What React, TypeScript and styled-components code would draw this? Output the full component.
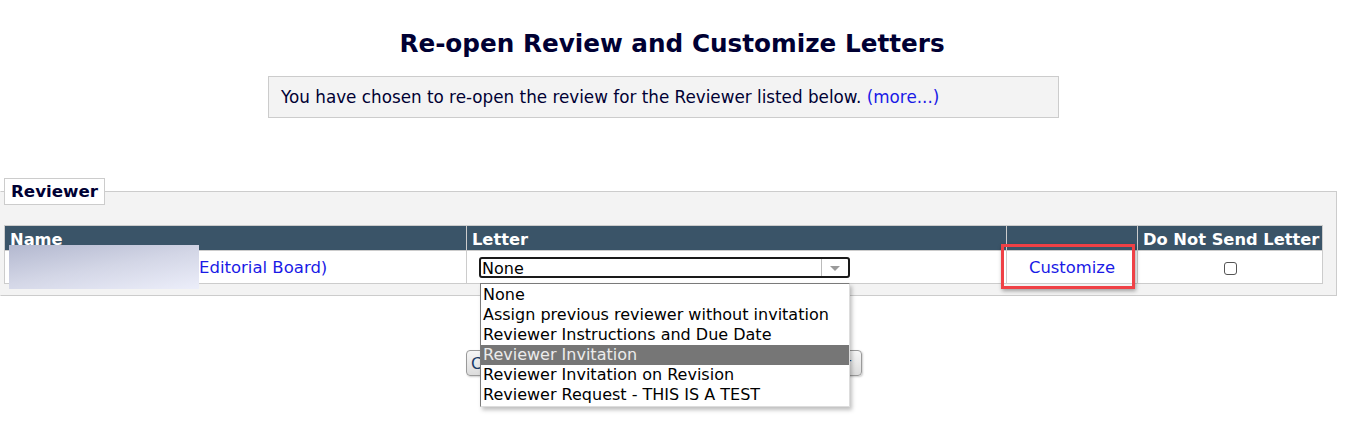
import React from "react";
import styled, { createGlobalStyle } from "styled-components";

const Global = createGlobalStyle`
  html, body { margin: 0; padding: 0; background: #fff; }
  body { font-family: "DejaVu Sans", Verdana, sans-serif; color: #000; }
`;

const Page = styled.div`
  width: 1361px;
  height: 432px;
  overflow: hidden;
  position: relative;
`;

const Title = styled.h1`
  margin: 0;
  padding-top: 29px;
  width: 1344px;
  text-align: center;
  font-size: 24.7px;
  font-weight: bold;
  line-height: 30px;
  color: #000033;
`;

const InfoBox = styled.div`
  margin: 17px 0 0 268px;
  width: 791px;
  height: 42px;
  box-sizing: border-box;
  border: 1px solid #cccccc;
  background: #f3f3f3;
  padding: 0 12px;
  display: flex;
  align-items: center;
  font-size: 16.8px;
  color: #000033;
`;

const Link = styled.a`
  color: #1a1ae6;
  text-decoration: none;
  cursor: pointer;
`;

const Fieldset = styled.fieldset`
  margin: 60px 0 0 0;
  width: 1337px;
  box-sizing: border-box;
  border: 1px solid #cccccc;
  border-left-color: #f3f3f3;
  background: #f3f3f3;
  padding: 0 0 11px 3px;
  min-width: 0;
`;

const Legend = styled.legend`
  background: #fff;
  border: 1px solid #cccccc;
  padding: 0 6px;
  height: 27px;
  box-sizing: border-box;
  font-size: 16.7px;
  font-weight: bold;
  line-height: 25px;
  color: #000033;
`;

const Table = styled.table`
  margin-top: 20px;
  width: 1319px;
  border-collapse: collapse;
  background: #fff;
  table-layout: fixed;
`;

const Th = styled.th<{ $w: number }>`
  width: ${(p) => p.$w}px;
  background: #3a5468;
  color: #fff;
  font-size: 16.3px;
  font-weight: bold;
  text-align: left;
  padding: 3px 5px 0;
  height: 21px;
  line-height: 21px;
  border: 1px solid #cccccc;
  white-space: nowrap;
  overflow: hidden;
`;

const Td = styled.td<{ $align?: string }>`
  border: 1px solid #cccccc;
  height: 32px;
  padding: 0 5px;
  text-align: ${(p) => p.$align || "left"};
  vertical-align: middle;
  font-size: 16.5px;
  position: relative;
`;

const NameText = styled.span`
  display: inline-block;
  padding-left: 189px;
`;

const Redaction = styled.div`
  position: absolute;
  left: 4px;
  top: -6px;
  width: 190px;
  height: 44px;
  background: linear-gradient(170deg, #b3b8cf 0%, #d3d6e6 50%, #eceefa 100%);
  filter: blur(0.5px);
`;

const SelectWrap = styled.div`
  position: relative;
  margin-left: 7px;
  width: 371px;
`;

const SelectBox = styled.div`
  height: 21px;
  box-sizing: border-box;
  border: 2px solid #1a1a1a;
  border-radius: 3px;
  background: #fff;
  display: flex;
  align-items: flex-end;
  font-size: 16px;
  color: #000;
  padding-left: 1px;
`;

const SelectValue = styled.span`
  flex: 1;
  line-height: 17px;
  margin-bottom: -1px;
`;

const Arrow = styled.span`
  width: 26px;
  height: 100%;
  border-left: 1px solid #bbbbbb;
  display: flex;
  align-items: center;
  justify-content: center;
  &::after {
    content: "";
    border-left: 5px solid transparent;
    border-right: 5px solid transparent;
    border-top: 5px solid #9a9a9a;
    margin-top: 2px;
  }
`;

const Dropdown = styled.ul`
  position: absolute;
  left: 1px;
  top: 26px;
  width: 370px;
  margin: 0;
  padding: 1px 0 1px 0;
  list-style: none;
  background: #fff;
  border: 1px solid #7a7a7a;
  border-right-color: #dddddd;
  border-bottom-color: #dddddd;
  box-sizing: border-box;
  box-shadow: 2px 3px 4px rgba(0, 0, 0, 0.25);
  z-index: 10;
`;

const Option = styled.li<{ $active?: boolean }>`
  height: 20px;
  line-height: 20px;
  padding-left: 2px;
  font-size: 16px;
  white-space: nowrap;
  background: ${(p) => (p.$active ? "#767676" : "#fff")};
  color: ${(p) => (p.$active ? "#ececec" : "#000")};
`;

const CustomizeLink = styled(Link)`
  font-size: 16.4px;
`;

const Highlight = styled.div`
  position: absolute;
  left: -6px;
  top: -7px;
  width: 134px;
  height: 45px;
  box-sizing: border-box;
  border: 3px solid #ef4146;
  box-shadow: 1px 2px 4px rgba(0, 0, 0, 0.35);
  pointer-events: none;
`;

const Checkbox = styled.span`
  display: inline-block;
  width: 13px;
  height: 13px;
  box-sizing: border-box;
  border: 1px solid #555;
  border-radius: 3px;
  background: #fff;
  vertical-align: middle;
`;

const ButtonRow = styled.div`
  margin: 54px 0 0 466px;
  width: 396px;
  display: flex;
  justify-content: space-between;
`;

const Button = styled.button`
  height: 26px;
  box-sizing: border-box;
  border: 1px solid #9a9a9a;
  border-radius: 4px;
  background: linear-gradient(#f6f6f6, #dcdcdc);
  font-family: "DejaVu Sans", Verdana, sans-serif;
  font-size: 16px;
  color: #1a3a66;
  padding: 0 10px 0 4px;
  box-shadow: 1px 1px 2px rgba(0, 0, 0, 0.2);
`;

const options = [
  "None",
  "Assign previous reviewer without invitation",
  "Reviewer Instructions and Due Date",
  "Reviewer Invitation",
  "Reviewer Invitation on Revision",
  "Reviewer Request - THIS IS A TEST",
];

export default function App() {
  return (
    <>
      <Global />
      <Page>
        <Title>Re-open Review and Customize Letters</Title>
        <InfoBox>
          <span>
            You have chosen to re-open the review for the Reviewer listed below.{" "}
            <Link>(more...)</Link>
          </span>
        </InfoBox>
        <Fieldset>
          <Legend>Reviewer</Legend>
          <Table>
            <thead>
              <tr>
                <Th $w={451}>Name</Th>
                <Th $w={529}>Letter</Th>
                <Th $w={120}></Th>
                <Th $w={174}>Do Not Send Letter</Th>
              </tr>
            </thead>
            <tbody>
              <tr>
                <Td>
                  <Link>
                    <NameText>Editorial Board)</NameText>
                  </Link>
                  <Redaction />
                </Td>
                <Td>
                  <SelectWrap>
                    <SelectBox>
                      <SelectValue>None</SelectValue>
                      <Arrow />
                    </SelectBox>
                    <Dropdown>
                      {options.map((o, i) => (
                        <Option key={o} $active={i === 3}>
                          {o}
                        </Option>
                      ))}
                    </Dropdown>
                  </SelectWrap>
                </Td>
                <Td $align="center">
                  <CustomizeLink>Customize</CustomizeLink>
                  <Highlight />
                </Td>
                <Td $align="center">
                  <Checkbox />
                </Td>
              </tr>
            </tbody>
          </Table>
        </Fieldset>
        <ButtonRow>
          <Button>Cancel</Button>
          <Button>Re-open Review and Send Letter</Button>
        </ButtonRow>
      </Page>
    </>
  );
}
